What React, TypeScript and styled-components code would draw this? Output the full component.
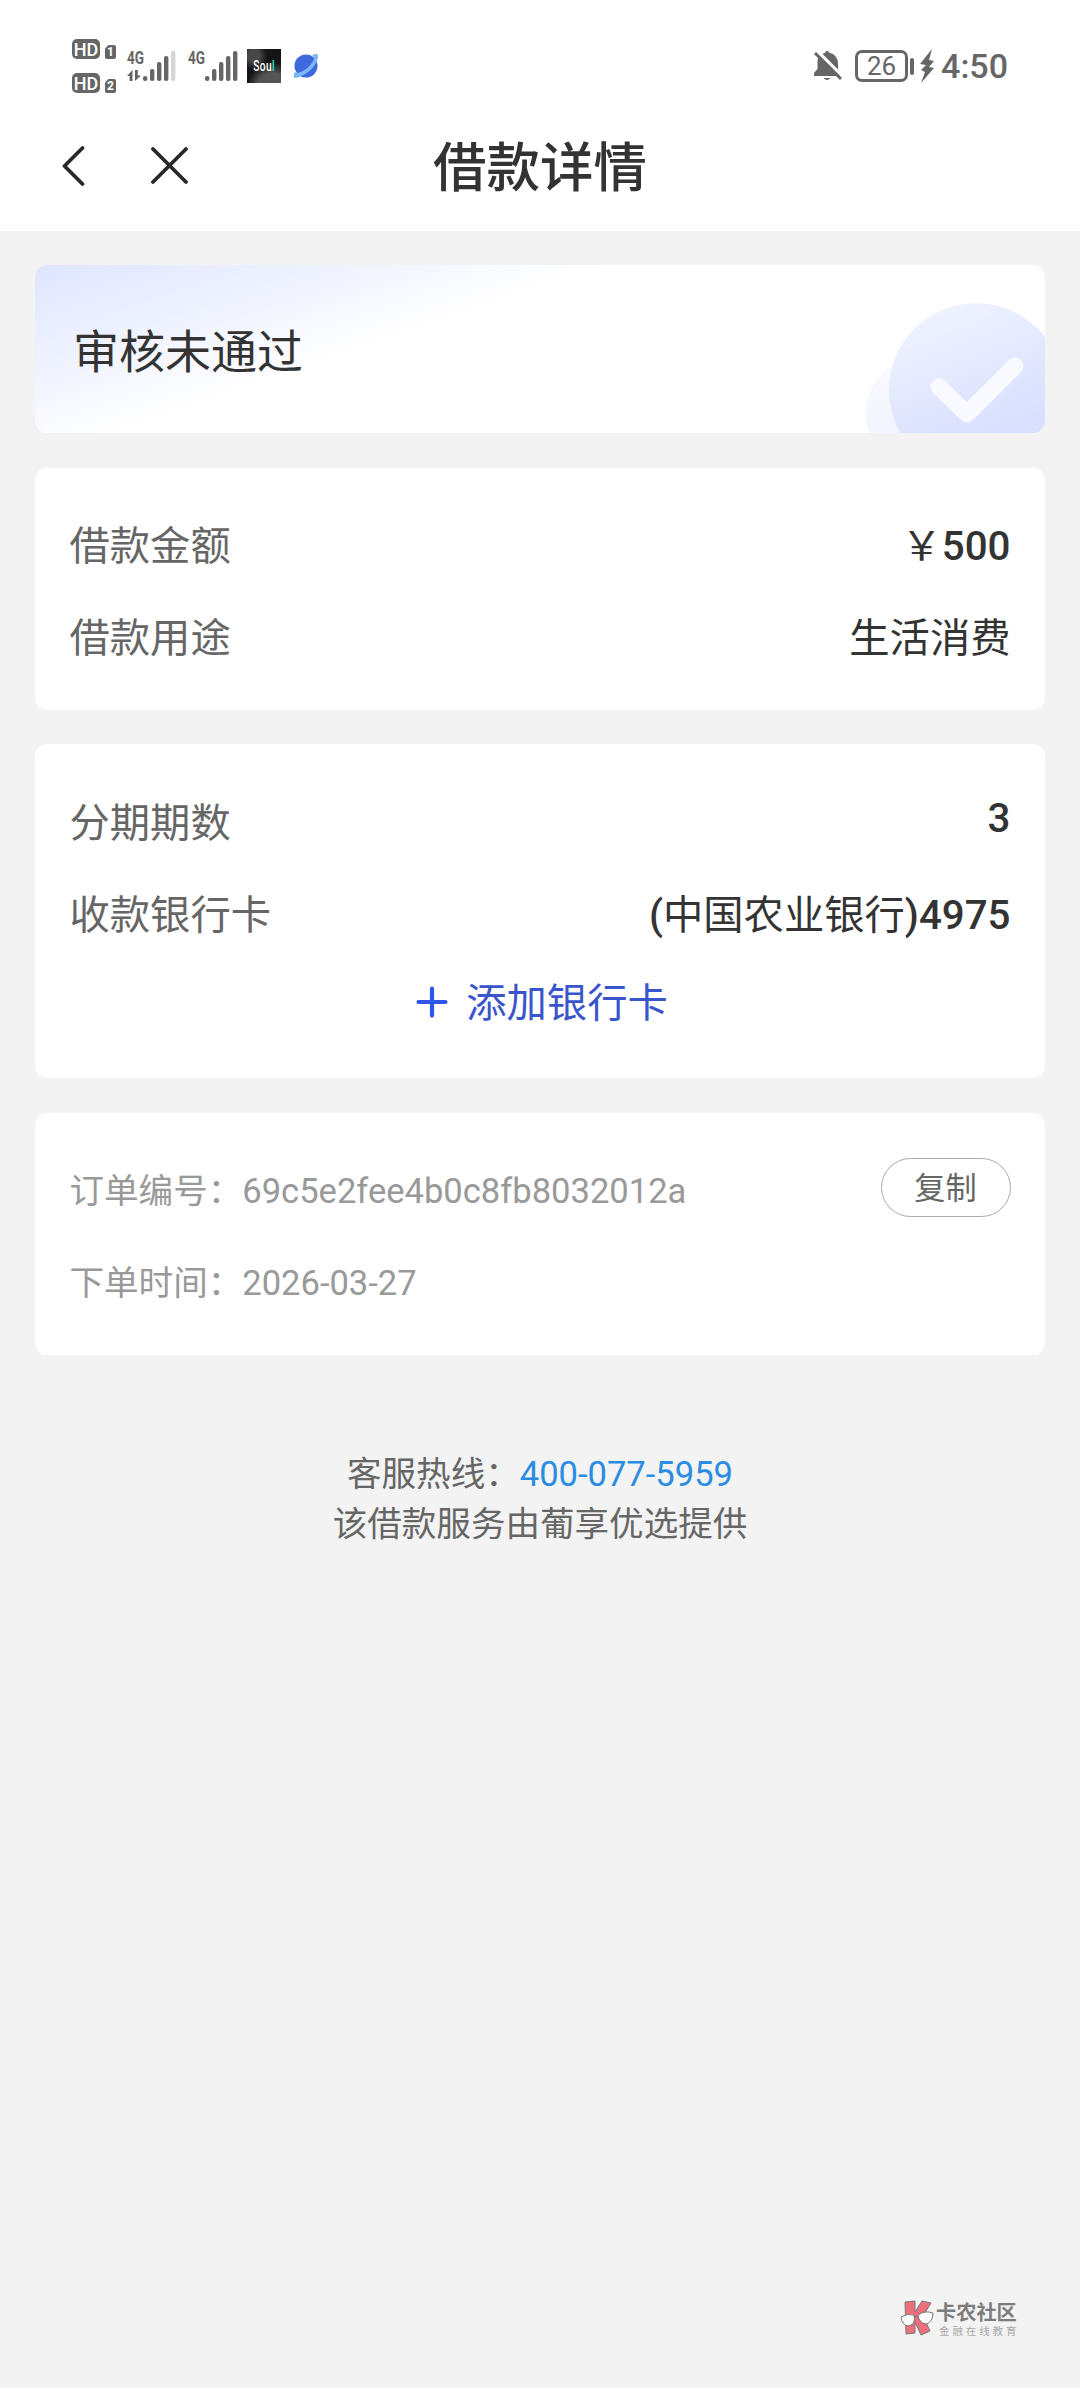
import React from "react";
import styled, { createGlobalStyle } from "styled-components";

const GlobalStyle = createGlobalStyle`
  * { box-sizing: border-box; }
  body {
    margin: 0;
    background: #f3f3f3;
    color: #333;
    font-family: Roboto, "Noto Sans CJK SC", sans-serif;
  }
`;

const Page = styled.div`
  position: relative;
  min-height: 2388px;
  background: #f3f3f3;
`;

const StatusBar = styled.div`
  display: flex;
  align-items: center;
  justify-content: space-between;
  height: 100px;
  padding: 32px 72px 0 72px;
  background: #fff;
  color: #666;
`;

const StatusGroup = styled.div`
  display: flex;
  align-items: center;
`;

const Spacer = styled.span<{ $w: number }>`
  width: ${(p) => p.$w}px;
`;

const HdStack = styled.div`
  display: flex;
  flex-direction: column;
  gap: 14px;
`;

const HdRow = styled.div`
  display: flex;
  align-items: flex-end;
  gap: 5px;
`;

const HdTag = styled.span`
  width: 28px;
  height: 20px;
  border-radius: 5px;
  background: #666;
  color: #fff;
  font: 500 18px/21px Roboto, sans-serif;
  text-align: center;
`;

const SimTag = styled.span`
  width: 11px;
  height: 14px;
  border-radius: 2px;
  clip-path: polygon(30% 0, 100% 0, 100% 100%, 0 100%, 0 25%);
  background: #666;
  color: #fff;
  font: 700 12px/14px Roboto, sans-serif;
  text-align: center;
`;

const SoulIcon = styled.span`
  display: flex;
  align-items: center;
  justify-content: center;
  width: 34px;
  height: 34px;
  background: radial-gradient(circle at 75% 115%, #555 0 32%, transparent 55%),
    radial-gradient(circle at 20% 20%, #484848 0 15%, transparent 35%), #151515;
  color: #fff;
  font: 500 15px/34px Roboto, sans-serif;
`;

const SoulWord = styled.span`
  display: block;
  letter-spacing: 0.6px;
  transform: scaleX(0.68);
`;

const Mint = styled.span`
  color: #25d4bb;
  font-weight: 700;
`;

const Battery = styled.span`
  width: 53px;
  height: 32px;
  border: 3px solid #666;
  border-radius: 7px;
  font-size: 26px;
  line-height: 27px;
  text-align: center;
`;

const BatteryTip = styled.span`
  width: 4px;
  height: 17px;
  margin-left: 2px;
  border-radius: 2px;
  background: #666;
`;

const Clock = styled.span`
  font-size: 34px;
  line-height: 34px;
  font-weight: 500;
`;

const Header = styled.header`
  display: grid;
  grid-template-columns: 1fr auto 1fr;
  align-items: center;
  height: 131px;
  padding: 5px 62px 0;
  border-bottom: 5px solid #fdfdfd;
  background: #fff;
`;

const NavIcons = styled.div`
  display: flex;
  align-items: center;
  gap: 65px;
`;

const Title = styled.h1`
  margin: 0;
  padding-top: 6px;
  font-size: 53.5px;
  line-height: 64px;
  font-weight: 500;
`;

const Content = styled.main`
  display: flex;
  flex-direction: column;
  gap: 34.5px;
  padding: 34px 35px 0;
`;

const Card = styled.section<{ $height: number }>`
  height: ${(p) => p.$height}px;
  padding: 29px 34.5px 0;
  border-radius: 12px;
  background: #fff;
`;

const Banner = styled.section`
  display: flex;
  align-items: center;
  justify-content: space-between;
  height: 168px;
  padding-left: 38px;
  border-radius: 12px;
  overflow: hidden;
  background: linear-gradient(161deg, #dfe5ff 0%, #eef2ff 19%, #fff 38%);
  font-size: 46px;
`;

const BannerText = styled.span`
  padding-bottom: 3px;
`;

const Row = styled.div`
  display: flex;
  align-items: center;
  justify-content: space-between;
  height: 92px;
  font-size: 40.3px;
`;

const Label = styled.span`
  color: #666;
`;

const Value = styled.span<{ $lift?: number }>`
  padding-bottom: ${(p) => p.$lift ?? 0}px;
  font-weight: 500;
`;

const Hanzi = styled.span`
  font-weight: 400;
`;

const AddCard = styled.button`
  display: flex;
  align-items: center;
  justify-content: center;
  gap: 18px;
  width: 100%;
  height: 84px;
  padding: 0 0 0 4px;
  border: 0;
  background: none;
  color: #3a54cc;
  font: 400 40.3px Roboto, "Noto Sans CJK SC", sans-serif;
`;

const OrderRow = styled(Row)`
  color: #999;
  font-size: 34.56px;
`;

const CopyButton = styled.button`
  width: 130px;
  height: 59px;
  padding: 0 0 5px;
  border: 1px solid #aaa;
  border-radius: 30px;
  background: #fff;
  color: #666;
  font: 400 31.2px Roboto, "Noto Sans CJK SC", sans-serif;
`;

const Footer = styled.footer`
  padding-top: 94px;
  color: #666;
  font-size: 34.56px;
  line-height: 50px;
  text-align: center;
`;

const Phone = styled.span`
  color: #2a8ce2;
`;

const Watermark = styled.div`
  position: absolute;
  left: 900px;
  top: 2300px;
  display: flex;
  align-items: center;
  gap: 2px;
`;

const MarkText = styled.div`
  display: flex;
  flex-direction: column;
  gap: 3px;
`;

const MarkName = styled.span`
  color: #7c7c7c;
  font: 700 20.2px/21px "Noto Sans CJK SC", sans-serif;
`;

const MarkSub = styled.span`
  padding-left: 3px;
  color: #aaa;
  font: 400 10.5px/11px "Noto Sans CJK SC", sans-serif;
  letter-spacing: 2.9px;
  white-space: nowrap;
`;

function Signal({ arrows, weak }: { arrows?: boolean; weak?: boolean }) {
  const x = arrows ? 16 : 17;
  const tops = [26, 19, 12, 6, 1];
  return (
    <svg width="51" height="44" viewBox="0 -6 51 44">
      <text x="0" y="13.5" fontFamily="Roboto" fontWeight="700" fontSize="17.5" textLength="17" lengthAdjust="spacingAndGlyphs" fill="#666">4G</text>
      {arrows && <path d="M0 26 5.5 20V31H2.6V26ZM8 20H10.8V25.5H14L8 31Z" fill="#666" />}
      {tops.map((t, i) => (
        <rect key={t} x={x + i * 7} y={t} width="4.4" height={31 - t} rx="2" fill={weak && i === 4 ? "#d5d5d5" : "#666"} />
      ))}
    </svg>
  );
}

function Planet() {
  return (
    <svg width="26" height="28" viewBox="0 0 26 28">
      <circle cx="13" cy="14" r="11.5" fill="#3d69dc" />
      <path d="M2 20C-1 26 2 27 6 25C15 22 24 13 25 5C25 1 22 1 19 4L21 5C22 10 12 20 4 21Z" fill="#79b7f6" />
    </svg>
  );
}

function BellOff() {
  return (
    <svg width="30" height="32" viewBox="0 0 30 32">
      <path d="M1 26V23L4.500 19V12Q4.500 8 7 6L25 24L27 26ZM10.500 28H17.500Q14 32 10.500 28Z" fill="#666" />
      <path d="M9.500 4Q11 3 12 2.800Q14 -1 16 2.500Q25 4.500 25 14V19.500Z" fill="#666" />
      <path d="M2 3 28 29" stroke="#666" strokeWidth="3" />
    </svg>
  );
}

function Bolt() {
  return (
    <svg width="15" height="34" viewBox="0 0 15 34">
      <path d="M12 0 0 15 6 16 1 21 5 23 1 34 14 19 9 18 14 12 9 11Z" fill="#666" />
    </svg>
  );
}

function Back() {
  return (
    <svg width="24" height="42" viewBox="0 0 24 42" fill="none" stroke="#282828" strokeWidth="3.8" strokeLinecap="round" strokeLinejoin="round">
      <path d="M20.500 3 2.500 21 20.500 39" />
    </svg>
  );
}

function Close() {
  return (
    <svg width="38" height="38" viewBox="0 0 38 38" fill="none" stroke="#282828" strokeWidth="3.8" strokeLinecap="round">
      <path d="M2 2 35 35M35 2 2 35" />
    </svg>
  );
}

function CheckBadge() {
  return (
    <svg width="180" height="168" viewBox="0 0 180 168">
      <defs>
        <linearGradient id="disc" x1="0.25" y1="0" x2="0.65" y2="1">
          <stop offset="0" stopColor="#f0f4ff" />
          <stop offset="0.4" stopColor="#e4e9fe" />
          <stop offset="0.8" stopColor="#d8dfff" />
        </linearGradient>
        <linearGradient id="shade" x1="0" y1="0" x2="0" y2="1">
          <stop offset="0" stopColor="#fafbff" />
          <stop offset="0.6" stopColor="#f3f5ff" />
        </linearGradient>
      </defs>
      <circle cx="61" cy="149" r="60" fill="url(#shade)" />
      <circle cx="111" cy="125" r="87" fill="url(#disc)" />
      <path d="M74 122 102 149 150 101" fill="none" stroke="#f8faff" strokeWidth="17" strokeLinecap="round" strokeLinejoin="round" />
    </svg>
  );
}

const PlusIcon = styled.svg`
  margin-top: 5px;
`;

function Plus() {
  return (
    <PlusIcon width="32" height="32" viewBox="0 0 32 32" stroke="#2f56ea" strokeWidth="4.2" strokeLinecap="round">
      <path d="M16 2.500V29.500M2.500 16H29.500" />
    </PlusIcon>
  );
}

function Mascot() {
  return (
    <svg width="34" height="36" viewBox="0 0 34 36" stroke="#777" strokeWidth="1">
      <path d="M5 2 15 1V12L22 1 31 3 23 16 30 31 21 35 15 22V33L6 34Z" fill="#ee6f7b" />
      <path d="M1 17Q8 13 14 15Q16 25 8 26Q2 25 1 17ZM18 15Q25 10 33 13Q33 22 26 24Q19 23 18 15Z" fill="#fff" />
      <path d="M14 17 18 16" fill="none" />
    </svg>
  );
}

export default function App() {
  return (
    <Page>
      <GlobalStyle />
      <StatusBar>
        <StatusGroup>
          <HdStack>
            <HdRow><HdTag>HD</HdTag><SimTag>1</SimTag></HdRow>
            <HdRow><HdTag>HD</HdTag><SimTag>2</SimTag></HdRow>
          </HdStack>
          <Spacer $w={11} />
          <Signal arrows weak />
          <Spacer $w={10} />
          <Signal />
          <Spacer $w={8} />
          <SoulIcon><SoulWord>Sou<Mint>l</Mint></SoulWord></SoulIcon>
          <Spacer $w={12} />
          <Planet />
        </StatusGroup>
        <StatusGroup>
          <BellOff />
          <Spacer $w={12} />
          <Battery>26</Battery>
          <BatteryTip />
          <Spacer $w={6} />
          <Bolt />
          <Spacer $w={6} />
          <Clock>4:50</Clock>
        </StatusGroup>
      </StatusBar>
      <Header>
        <NavIcons><Back /><Close /></NavIcons>
        <Title>借款详情</Title>
      </Header>
      <Content>
        <Banner><BannerText>审核未通过</BannerText><CheckBadge /></Banner>
        <Card $height={242}>
          <Row><Label>借款金额</Label><Value><Hanzi>￥</Hanzi>500</Value></Row>
          <Row><Label>借款用途</Label><Value><Hanzi>生活消费</Hanzi></Value></Row>
        </Card>
        <Card $height={334}>
          <Row><Label>分期期数</Label><Value $lift={1}>3</Value></Row>
          <Row><Label>收款银行卡</Label><Value>(<Hanzi>中国农业银行</Hanzi>)4975</Value></Row>
          <AddCard><Plus />添加银行卡</AddCard>
        </Card>
        <Card $height={242}>
          <OrderRow><span>订单编号：69c5e2fee4b0c8fb8032012a</span><CopyButton>复制</CopyButton></OrderRow>
          <OrderRow><span>下单时间：2026-03-27</span></OrderRow>
        </Card>
      </Content>
      <Footer>
        <div>客服热线：<Phone>400-077-5959</Phone></div>
        <div>该借款服务由葡享优选提供</div>
      </Footer>
      <Watermark>
        <Mascot />
        <MarkText><MarkName>卡农社区</MarkName><MarkSub>金融在线教育</MarkSub></MarkText>
      </Watermark>
    </Page>
  );
}
